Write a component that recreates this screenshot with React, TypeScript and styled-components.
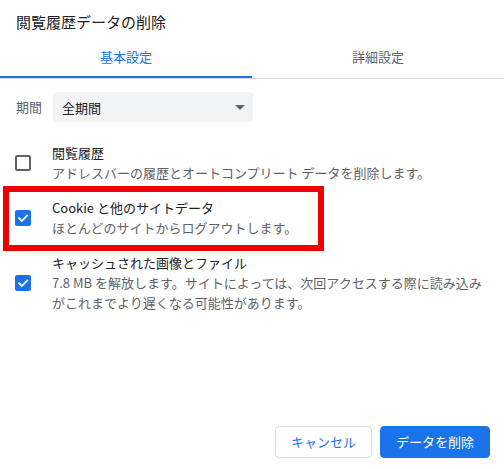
import React from "react";
import styled, { createGlobalStyle, css } from "styled-components";

const Global = createGlobalStyle`
  html, body { margin: 0; padding: 0; background: #fff; }
  body { font-family: "Noto Sans CJK JP", "Noto Sans", sans-serif; }
  *, *::before, *::after { box-sizing: border-box; }
`;

const Dialog = styled.div`
  width: 504px;
  height: 469px;
  display: flex;
  flex-direction: column;
  background: #fff;
  color: #202124;
`;

const Title = styled.h1`
  margin: 0;
  padding: 12px 16px 4px;
  font-size: 15px;
  line-height: 20px;
  font-weight: 400;
  color: #202124;
`;

const TabBar = styled.div`
  display: flex;
  border-bottom: 1px solid #dadce0;
`;

const Tab = styled.div<{ $active?: boolean }>`
  flex: 1;
  height: 42px;
  display: flex;
  align-items: center;
  justify-content: center;
  font-size: 13px;
  line-height: 20px;
  color: ${(p) => (p.$active ? "#1a73e8" : "#5f6368")};
  ${(p) =>
    p.$active &&
    css`
      box-shadow: inset 0 -2px 0 #1a73e8;
    `}
`;

const PeriodRow = styled.div`
  display: flex;
  align-items: center;
  padding: 13px 16px 0;
`;

const PeriodLabel = styled.span`
  font-size: 13px;
  line-height: 20px;
  color: #5f6368;
  width: 37px;
`;

const Select = styled.div`
  width: 200px;
  height: 30px;
  background: #f1f3f4;
  border-radius: 4px;
  display: flex;
  align-items: center;
  justify-content: space-between;
  padding: 0 8px 0 9px;
  font-size: 13px;
  color: #202124;
`;

const Caret = styled.span`
  width: 0;
  height: 0;
  border-left: 5px solid transparent;
  border-right: 5px solid transparent;
  border-top: 5px solid #5f6368;
  margin-top: 1px;
`;

const List = styled.div`
  display: flex;
  flex-direction: column;
  padding-top: 14px;
`;

const Item = styled.div<{ $highlight?: boolean }>`
  position: relative;
  display: flex;
  align-items: center;
  padding: 7px 16px 8px 15px;
  gap: 21px;
  ${(p) =>
    p.$highlight &&
    css`
      &::after {
        content: "";
        position: absolute;
        top: -5px;
        bottom: -5px;
        left: 3px;
        width: 321px;
        border: 6px solid #f20000;
        pointer-events: none;
      }
    `}
`;

const Box = styled.span<{ $checked?: boolean }>`
  flex: none;
  width: 16px;
  height: 16px;
  border-radius: 2px;
  display: flex;
  align-items: center;
  justify-content: center;
  ${(p) =>
    p.$checked
      ? css`
          background: #1a73e8;
        `
      : css`
          border: 2px solid #5f6368;
        `}
`;

const Texts = styled.div`
  display: flex;
  flex-direction: column;
  white-space: nowrap;
`;

const ItemTitle = styled.div`
  font-size: 13px;
  line-height: 20px;
  color: #202124;
`;

const ItemSub = styled.div`
  font-size: 13px;
  line-height: 20px;
  color: #5f6368;
`;

const Spacer = styled.div`
  flex: 1;
`;

const Footer = styled.div`
  display: flex;
  justify-content: flex-end;
  gap: 8px;
  padding: 0 14px 11px;
`;

const Button = styled.button<{ $primary?: boolean }>`
  height: 32px;
  padding: 0 15px;
  border-radius: 4px;
  font-family: inherit;
  font-size: 13px;
  line-height: 20px;
  cursor: pointer;
  ${(p) =>
    p.$primary
      ? css`
          background: #1a73e8;
          color: #fff;
          border: 1px solid #1a73e8;
        `
      : css`
          background: #fff;
          color: #1a73e8;
          border: 1px solid #dadce0;
        `}
`;

const Check = () => (
  <svg width="12" height="12" viewBox="0 0 12 12" fill="none">
    <path d="M2 6.2 L4.8 9 L10.2 3.4" stroke="#fff" strokeWidth="1.8" strokeLinecap="square" />
  </svg>
);

const Checkbox = ({ checked }: { checked?: boolean }) => (
  <Box $checked={checked}>{checked && <Check />}</Box>
);

export default function App() {
  return (
    <>
      <Global />
      <Dialog>
        <Title>閲覧履歴データの削除</Title>
        <TabBar>
          <Tab $active>基本設定</Tab>
          <Tab>詳細設定</Tab>
        </TabBar>
        <PeriodRow>
          <PeriodLabel>期間</PeriodLabel>
          <Select>
            <span>全期間</span>
            <Caret />
          </Select>
        </PeriodRow>
        <List>
          <Item>
            <Checkbox />
            <Texts>
              <ItemTitle>閲覧履歴</ItemTitle>
              <ItemSub>アドレスバーの履歴とオートコンプリート データを削除します。</ItemSub>
            </Texts>
          </Item>
          <Item $highlight>
            <Checkbox checked />
            <Texts>
              <ItemTitle>Cookie と他のサイトデータ</ItemTitle>
              <ItemSub>ほとんどのサイトからログアウトします。</ItemSub>
            </Texts>
          </Item>
          <Item>
            <Checkbox checked />
            <Texts>
              <ItemTitle>キャッシュされた画像とファイル</ItemTitle>
              <ItemSub>
                7.8 MB を解放します。サイトによっては、次回アクセスする際に読み込み
                <br />
                がこれまでより遅くなる可能性があります。
              </ItemSub>
            </Texts>
          </Item>
        </List>
        <Spacer />
        <Footer>
          <Button>キャンセル</Button>
          <Button $primary>データを削除</Button>
        </Footer>
      </Dialog>
    </>
  );
}
